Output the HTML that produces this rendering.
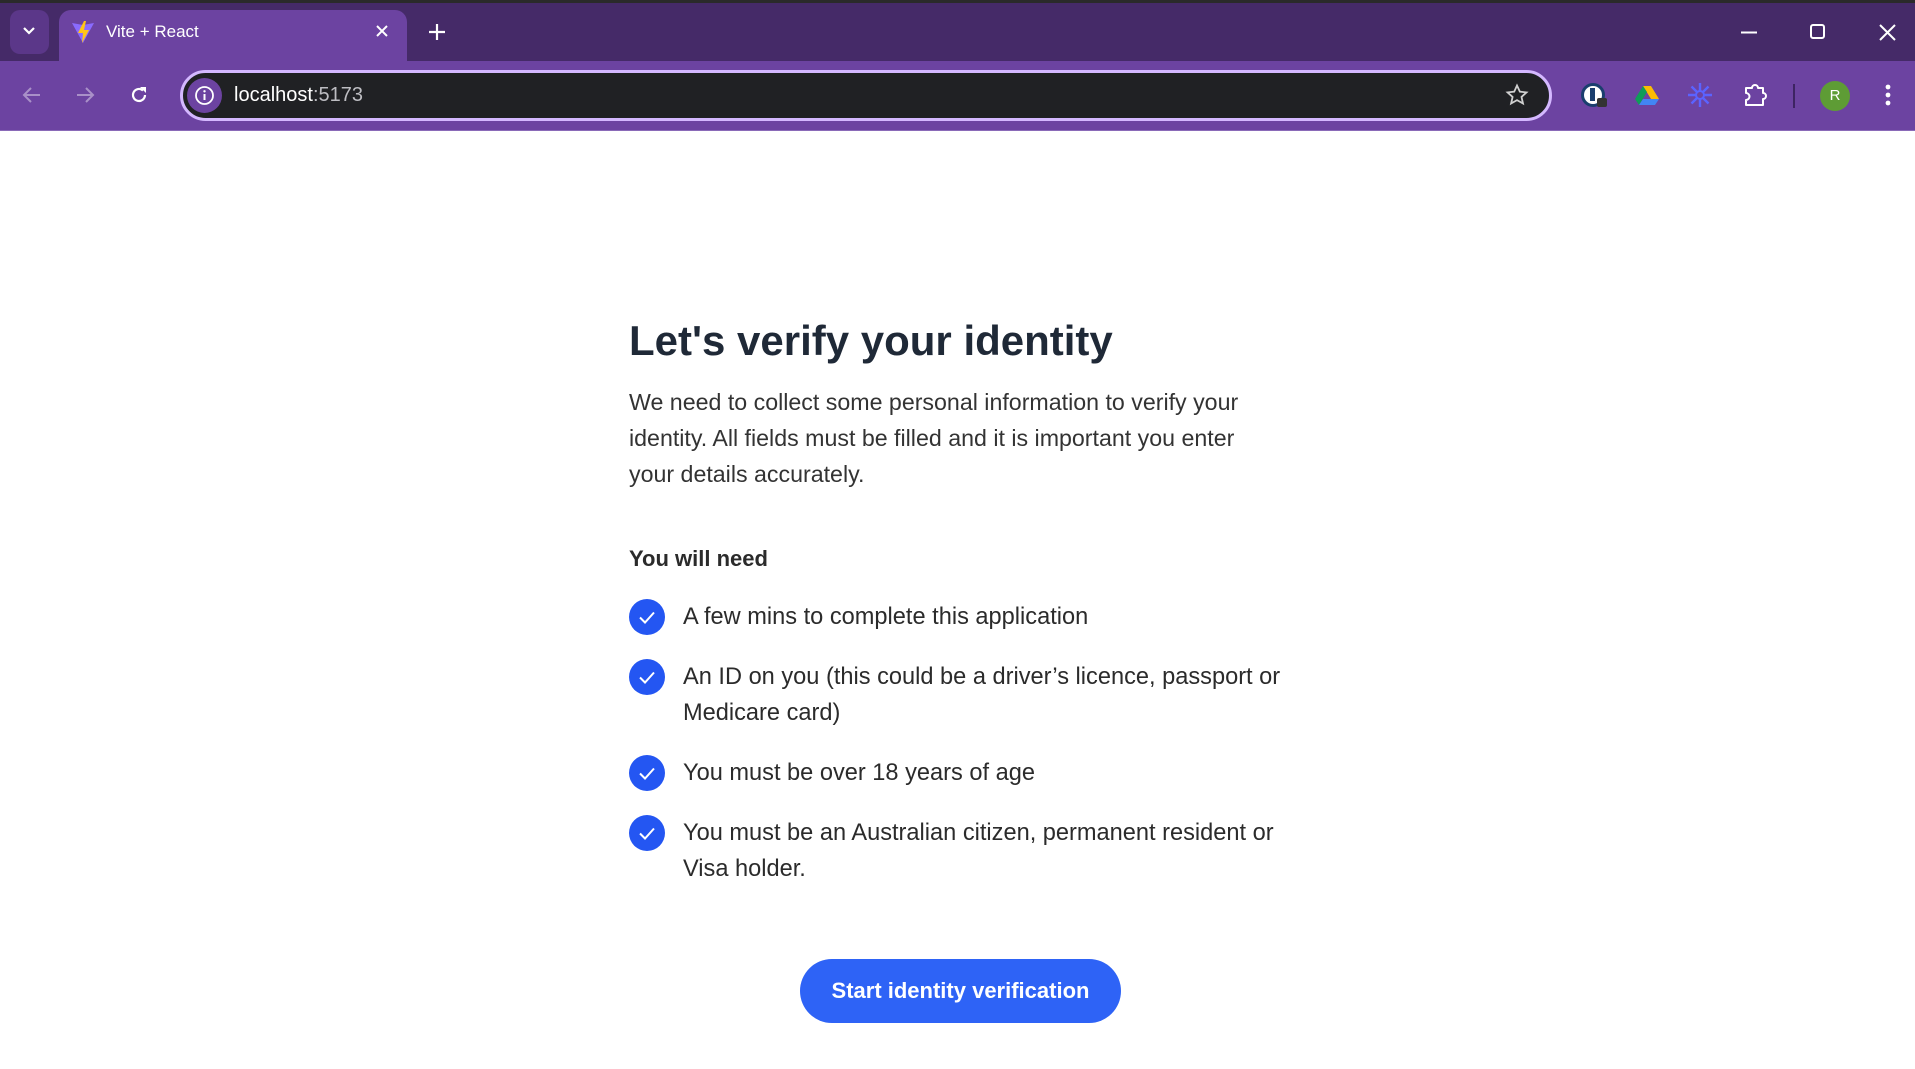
<!DOCTYPE html>
<html><head><meta charset="utf-8"><style>
*{margin:0;padding:0;box-sizing:border-box}
html,body{width:1915px;height:1069px;overflow:hidden;background:#fff;font-family:"Liberation Sans",sans-serif}
.abs{position:absolute}
#top{position:absolute;left:0;top:0;width:1915px;height:61px;background:#452a68;border-top:3px solid #2a2a2a}
#tb{position:absolute;left:0;top:61px;width:1915px;height:70px;background:#6c43a1;border-bottom:1px solid #8a6ab8}
.tab{left:59px;top:10px;width:348px;height:52px;background:#6c43a1;border-radius:12px 12px 0 0}
.addr{left:180px;top:70px;width:1372px;height:51px;background:#202124;border:3px solid #d4b8ff;border-radius:26px}
.txt{color:#333;font-size:22px;line-height:36px;white-space:nowrap}
h1{position:absolute;left:629px;top:316px;font-size:42px;line-height:50px;font-weight:700;color:#1f2937;white-space:nowrap}
ul{list-style:none;position:absolute;left:629px;top:599px}
li{position:relative;padding-left:54px;font-size:23.6px;line-height:36px;color:#2b2b2b;margin-bottom:24px;white-space:nowrap}
li .c{position:absolute;left:0;top:0;width:36px;height:36px;border-radius:50%;background:#2456f2}
.btn{left:800px;top:959px;width:321px;height:64px;border-radius:32px;background:#2e63f6;color:#fff;font-weight:700;font-size:22px;line-height:64px;text-align:center}
</style></head><body>
<div id="top"></div>
<div class="abs" style="left:10px;top:10px;width:39px;height:44px;border-radius:10px;background:#5b3789"></div>
<svg class="abs" style="left:21px;top:25px" width="16" height="12"><path d="M3 3l5 5 5-5" stroke="#fff" stroke-width="2.2" fill="none"/></svg>
<div class="abs tab"></div>
<svg class="abs" style="left:71px;top:20px" width="24" height="24" viewBox="0 0 24 24"><path d="M1 3l11 2 11-2-11 20z" fill="#8a6bff"/><path d="M13 1l-6 12h5l-1 10 7-13h-5l2-9z" fill="#ffc517"/></svg>
<div class="abs" style="left:106px;top:22px;color:#fff;font-size:17px">Vite + React</div>
<svg class="abs" style="left:375px;top:24px" width="14" height="14"><path d="M2 2l10 10M12 2L2 12" stroke="#fff" stroke-width="2"/></svg>
<svg class="abs" style="left:428px;top:23px" width="18" height="18"><path d="M9 1v16M1 9h16" stroke="#fff" stroke-width="2.2"/></svg>
<svg class="abs" style="left:1741px;top:31px" width="18" height="3"><path d="M0 1.5h16" stroke="#fff" stroke-width="2"/></svg>
<svg class="abs" style="left:1810px;top:24px" width="16" height="16"><rect x="1" y="1" width="13" height="13" rx="2" stroke="#fff" stroke-width="2" fill="none"/></svg>
<svg class="abs" style="left:1879px;top:24px" width="17" height="17"><path d="M1 1l15 15M16 1L1 16" stroke="#fff" stroke-width="2"/></svg>
<div id="tb"></div>
<svg class="abs" style="left:22px;top:86px" width="20" height="18"><path d="M18 9H3M9 2L2 9l7 7" stroke="#a990c8" stroke-width="2" fill="none"/></svg>
<svg class="abs" style="left:75px;top:86px" width="20" height="18"><path d="M2 9h15M11 2l7 7-7 7" stroke="#a990c8" stroke-width="2" fill="none"/></svg>
<svg class="abs" style="left:129px;top:85px" width="20" height="20" viewBox="0 0 20 20"><path d="M16 10a6 6 0 1 1-2-4.5" stroke="#fff" stroke-width="2.2" fill="none"/><path d="M11 2h6v6z" fill="#fff"/></svg>
<div class="abs addr"></div>
<div class="abs" style="left:187px;top:78px;width:35px;height:35px;border-radius:50%;background:#6c43a1"></div>
<svg class="abs" style="left:194px;top:85px" width="21" height="21"><circle cx="10.5" cy="10.5" r="8.5" stroke="#fff" stroke-width="1.8" fill="none"/><path d="M10.5 9v6" stroke="#fff" stroke-width="2"/><circle cx="10.5" cy="6.3" r="1.2" fill="#fff"/></svg>
<div class="abs" style="left:234px;top:84px;font-size:20px;color:#fff">localhost<span style="color:#bdbdc2">:5173</span></div>
<svg class="abs" style="left:1505px;top:83px" width="24" height="24" viewBox="0 0 24 24"><path d="M12 2.5l2.9 6.2 6.6.7-5 4.5 1.5 6.6L12 17.1l-5.9 3.4 1.5-6.6-5-4.5 6.6-.7z" stroke="#d0d0d0" stroke-width="1.8" fill="none"/></svg>
<div class="abs" style="left:1581px;top:83px;width:24px;height:24px;border-radius:50%;background:#fff;border:3px solid #1a3e6e"></div>
<div class="abs" style="left:1590px;top:88px;width:5px;height:13px;background:#1a3e6e"></div>
<div class="abs" style="left:1597px;top:98px;width:10px;height:9px;background:#333;border-radius:2px"></div>
<svg class="abs" style="left:1635px;top:85px" width="24" height="20" viewBox="0 0 24 20"><path d="M8 1h8l8 13h-8z" fill="#fbbc04"/><path d="M8 1L0 14l4 6 8-13z" fill="#0f9d58"/><path d="M4 20h16l4-6H8z" fill="#4285f4"/></svg>
<svg class="abs" style="left:1687px;top:82px" width="26" height="26" viewBox="0 0 26 26"><g stroke="#5b63ff" stroke-width="2.4"><path d="M13 1v8M13 17v8M1 13h8M17 13h8M4.5 4.5l5.5 5.5M16 16l5.5 5.5M21.5 4.5L16 10M10 16l-5.5 5.5"/></g><circle cx="13" cy="13" r="4" stroke="#5b63ff" stroke-width="2" fill="none"/></svg>
<svg class="abs" style="left:1743px;top:82px" width="26" height="26" viewBox="0 0 26 26"><path d="M3 6h6a3 3 0 0 1 6 0h5v5a3 3 0 0 1 0 6v6H3v-5a3 3 0 0 0 0-7z" stroke="#fff" stroke-width="2" fill="none" stroke-linejoin="round"/></svg>
<div class="abs" style="left:1793px;top:84px;width:2px;height:24px;background:#3d2462"></div>
<div class="abs" style="left:1820px;top:81px;width:30px;height:30px;border-radius:50%;background:#5e9c35;color:#fff;font-size:15px;line-height:30px;text-align:center">R</div>
<svg class="abs" style="left:1884px;top:83px" width="8" height="24"><circle cx="4" cy="4" r="2.4" fill="#fff"/><circle cx="4" cy="12" r="2.4" fill="#fff"/><circle cx="4" cy="20" r="2.4" fill="#fff"/></svg>

<h1>Let's verify your identity</h1>
<div class="abs txt" style="left:629px;top:384px;font-size:23.2px">We need to collect some personal information to verify your<br>identity. All fields must be filled and it is important you enter<br>your details accurately.</div>
<div class="abs txt" style="left:629px;top:541px;font-weight:700;color:#2b2b2b">You will need</div>
<ul>
<li><span class="c"><svg width="36" height="36"><path d="M11 18.5l5 5 9-10" stroke="#fff" stroke-width="2" fill="none"/></svg></span>A few mins to complete this application</li>
<li><span class="c"><svg width="36" height="36"><path d="M11 18.5l5 5 9-10" stroke="#fff" stroke-width="2" fill="none"/></svg></span>An ID on you (this could be a driver’s licence, passport or<br>Medicare card)</li>
<li><span class="c"><svg width="36" height="36"><path d="M11 18.5l5 5 9-10" stroke="#fff" stroke-width="2" fill="none"/></svg></span>You must be over 18 years of age</li>
<li><span class="c"><svg width="36" height="36"><path d="M11 18.5l5 5 9-10" stroke="#fff" stroke-width="2" fill="none"/></svg></span>You must be an Australian citizen, permanent resident or<br>Visa holder.</li>
</ul>
<div class="abs btn">Start identity verification</div>
</body></html>
